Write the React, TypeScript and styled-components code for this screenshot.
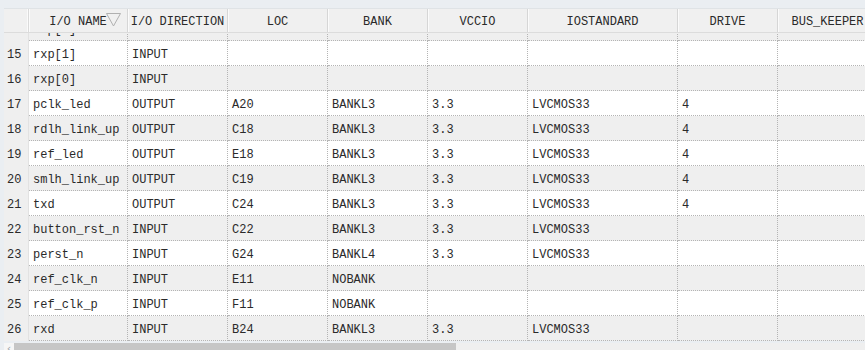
import styled, { createGlobalStyle } from "styled-components";

const GlobalStyle = createGlobalStyle`
    html, body {
        margin: 0;
        padding: 0;
        background: #eaeef2;
        overflow: hidden;
    }
`

const columns = [
    { key: "name", label: "I/O NAME", width: 99, filter: true },
    { key: "dir", label: "I/O DIRECTION", width: 100 },
    { key: "loc", label: "LOC", width: 100 },
    { key: "bank", label: "BANK", width: 100 },
    { key: "vccio", label: "VCCIO", width: 100 },
    { key: "std", label: "IOSTANDARD", width: 150 },
    { key: "drive", label: "DRIVE", width: 100 },
    { key: "keeper", label: "BUS_KEEPER", width: 100 },
];

const gridTemplate = "25px " + columns.map(c => c.width + "px").join(" ");

type Port = { n: number, cells: string[] };

// rows shown in the scrolled window, first one is partly hidden under the header
const ports: Port[] = [
    { n: 14, cells: ["rxp[2]", "INPUT"] },
    { n: 15, cells: ["rxp[1]", "INPUT"] },
    { n: 16, cells: ["rxp[0]", "INPUT"] },
    { n: 17, cells: ["pclk_led", "OUTPUT", "A20", "BANKL3", "3.3", "LVCMOS33", "4"] },
    { n: 18, cells: ["rdlh_link_up", "OUTPUT", "C18", "BANKL3", "3.3", "LVCMOS33", "4"] },
    { n: 19, cells: ["ref_led", "OUTPUT", "E18", "BANKL3", "3.3", "LVCMOS33", "4"] },
    { n: 20, cells: ["smlh_link_up", "OUTPUT", "C19", "BANKL3", "3.3", "LVCMOS33", "4"] },
    { n: 21, cells: ["txd", "OUTPUT", "C24", "BANKL3", "3.3", "LVCMOS33", "4"] },
    { n: 22, cells: ["button_rst_n", "INPUT", "C22", "BANKL3", "3.3", "LVCMOS33"] },
    { n: 23, cells: ["perst_n", "INPUT", "G24", "BANKL4", "3.3", "LVCMOS33"] },
    { n: 24, cells: ["ref_clk_n", "INPUT", "E11", "NOBANK"] },
    { n: 25, cells: ["ref_clk_p", "INPUT", "F11", "NOBANK"] },
    { n: 26, cells: ["rxd", "INPUT", "B24", "BANKL3", "3.3", "LVCMOS33"] },
];

const FilterIcon = () => (
    <svg width="15" height="14" viewBox="0 0 15 14">
        <polygon points="0.5,0.5 14.5,0.5 7.5,13" fill="none" stroke="#b0b0b0" strokeWidth="1" />
    </svg>
);

const App = () => {
    return (
        <Window>
            <GlobalStyle />
            <HeaderRow>
                <CornerCell />
                { columns.map(c => (
                    <HeaderCell key = { c.key }>
                        { c.label }
                        { c.filter && <FilterSlot><FilterIcon /></FilterSlot> }
                    </HeaderCell>
                )) }
            </HeaderRow>

            <Viewport>
                <ScrolledRows>
                    { ports.map(p => (
                        <Row key = { p.n } even = { p.n % 2 === 0 }>
                            <RowNumber>{ p.n }</RowNumber>
                            { columns.map((c, i) => (
                                <Cell key = { c.key }>{ p.cells[i] ?? "" }</Cell>
                            )) }
                        </Row>
                    )) }
                </ScrolledRows>
            </Viewport>

            <ScrollBar>
                <ScrollArrow>‹</ScrollArrow>
                <ScrollThumb />
            </ScrollBar>
        </Window>
    );
}

export default App;

const Window = styled.div`
    width: 865px;
    height: 350px;
    padding: 8px 0 0 4px;
    box-sizing: border-box;
    overflow: hidden;
    background: #eaeef2;
    font-family: "Liberation Mono", "Courier New", monospace;
    font-size: 12px;
    color: #2a2a2a;
`

const HeaderRow = styled.div`
    display: grid;
    grid-template-columns: ${ gridTemplate };
    height: 25px;
    background: #f0f0f0;
    border-top: 1px solid #dfe3e6;
    border-bottom: 1px solid #dcdcdc;
    box-sizing: border-box;
    width: max-content;
`

const CornerCell = styled.div`
    border-right: 1px solid #dadada;
    box-shadow: inset -1px 0 #fafafa;
`

const HeaderCell = styled.div`
    position: relative;
    display: flex;
    align-items: center;
    justify-content: center;
    padding-top: 3px;
    white-space: nowrap;
    border-right: 1px solid #d6d6d6;
    box-shadow: inset 1px 0 #fbfbfb;
    box-sizing: border-box;
`

const FilterSlot = styled.span`
    position: absolute;
    right: 6px;
    top: 4px;
    display: flex;
`

const Viewport = styled.div`
    height: 309px;
    overflow: hidden;
`

const ScrolledRows = styled.div`
    margin-top: -17px;
`

const Row = styled.div<{ even: boolean }>`
    display: grid;
    grid-template-columns: ${ gridTemplate };
    height: 25px;
    width: max-content;
    background: ${ props => props.even ? "#efefef" : "#ffffff" };
`

const RowNumber = styled.div`
    display: flex;
    align-items: center;
    padding: 3px 0 0 3px;
    background: #efefef;
    border-right: 1px solid #e2e2e2;
`

const Cell = styled.div`
    display: flex;
    align-items: center;
    padding: 3px 0 0 4px;
    white-space: nowrap;
    border-right: 1px dotted #b4b4b4;
    border-bottom: 1px dotted #b4b4b4;
    box-sizing: border-box;
`

const ScrollBar = styled.div`
    display: flex;
    height: 12px;
    margin-top: 1px;
    background: #efefef;
`

const ScrollArrow = styled.div`
    width: 10px;
    display: flex;
    align-items: center;
    justify-content: center;
    font-family: "DejaVu Sans", sans-serif;
    font-size: 11px;
    line-height: 8px;
    color: #9aa0a6;
    background: #f6f6f6;
`

const ScrollThumb = styled.div`
    width: 442px;
    background: #c6c6c6;
`
